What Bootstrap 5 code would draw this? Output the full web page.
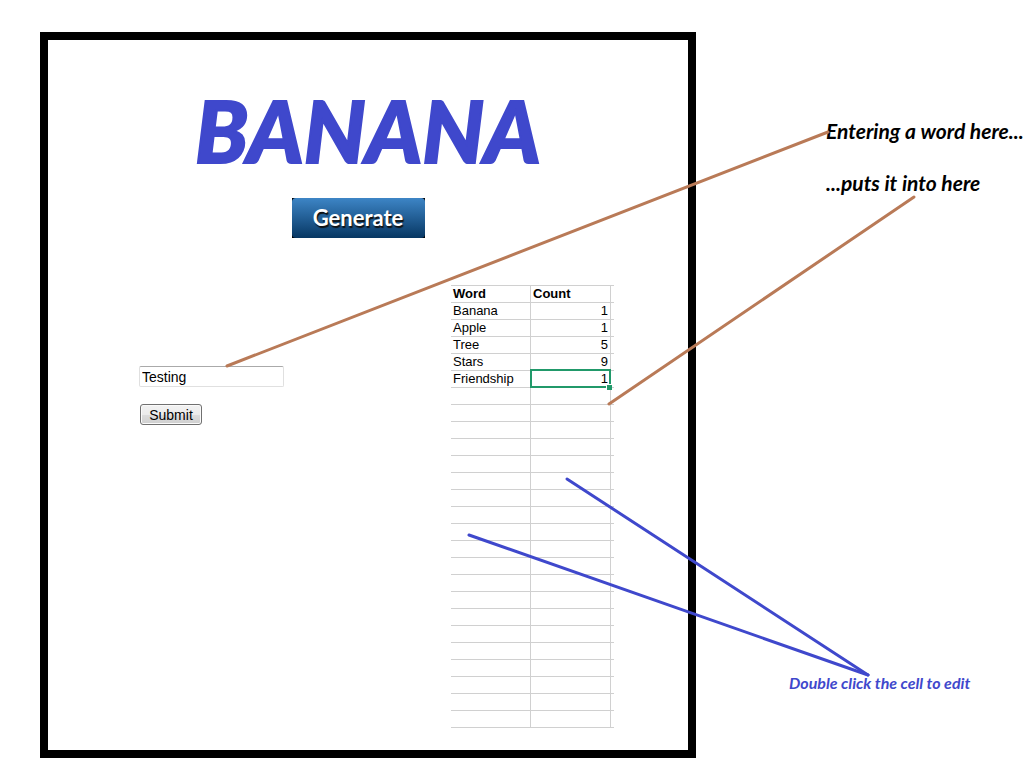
<!DOCTYPE html>
<html lang="en">
<head>
<meta charset="utf-8">
<meta name="viewport" content="width=device-width, initial-scale=1">
<title>Banana word generator</title>
<link href="https://cdn.jsdelivr.net/npm/bootstrap@5.3.0/dist/css/bootstrap.min.css" rel="stylesheet">
<style>
body { background: #fff; color: #000; font: 13px/16px "Liberation Sans", Arial, sans-serif; }
.stage { display: grid; grid-template-columns: 656fr 340fr; padding: 32px 0 14px 40px; }
.frame { border: 8px solid #000; padding: 46px 0 22px; }
.title, .gen-btn, .note { font-family: Lato, Carlito, Calibri, sans-serif; font-weight: 700; }
.title { font-size: 86px; line-height: 88px; font-style: italic; font-weight: 900; color: #3f48cc; -webkit-text-stroke: 2px #3f48cc; }
.gen-wrap { padding: 24px 20px 0 0; }
.gen-back { background: #000; }
.gen-btn { width: 133px; height: 40px; padding: 0; border: 0; border-radius: 4px; color: #fff; font-size: 22px; line-height: 40px;
  background: linear-gradient(#3d85c6, #073763); text-shadow: 1px 2px 1px #111; }
.work { display: grid; grid-template-columns: 403fr 237fr; padding-top: 47px; }
.entry { padding: 81px 0 0 91px; font-size: 14px; }
.word-box { width: 145px; height: 21px; padding: 1px 2px; line-height: 16px; border: 1px solid #e0e0e0; border-top-color: #aaa; border-radius: 2px; color: #000; }
.send { width: 62px; height: 21px; margin: 17px 0 0 1px; padding: 0; line-height: 16px; border: 1px solid #707070; border-radius: 3px; color: #000;
  background: linear-gradient(#f2f2f2, #ebebeb 50%, #ddd 50%, #cfcfcf); box-shadow: inset 0 0 0 1px #fafafa; }
.sheet { width: 163px; table-layout: fixed; border-collapse: separate; border-spacing: 0; border-top: 1px solid #d0d0d0; }
.sheet th, .sheet td { height: 17px; padding: 0 2px; line-height: 16px; border-bottom: 1px solid #d0d0d0; border-right: 1px solid #d0d0d0; white-space: nowrap; }
.sheet tbody th { font-weight: 400; }
.sheet tr > :last-child { padding: 0; border-right: 0; }
.sheet .picked { position: relative; }
.picked::before { content: ""; position: absolute; inset: -2px -1px -1px -1px; border: 2px solid #21996a; }
.picked::after { content: ""; position: absolute; right: -2px; bottom: -3px; width: 6px; height: 6px; background: #21996a; border: 1px solid #fff; border-width: 1px 0 0 1px; }
.col-word, .col-count { width: 80px; }
.notes { padding: 86px 0 66px 93px; }
.pair { padding-left: 37px; }
.note { margin: 0; font-style: italic; white-space: nowrap; }
.note-big { font-size: 21px; line-height: 26px; }
.note-big + .note-big { margin-top: 26px; }
.note-edit { font-size: 16px; line-height: 18px; color: #3f48cc; }
.pointers { position: absolute; inset: 0; width: 100%; height: 100%; pointer-events: none; }
.pointers line { stroke-width: 3px; vector-effect: non-scaling-stroke; stroke-linecap: round; }
</style>
</head>
<body>
<div class="stage position-relative">
  <main class="frame">
    <h1 class="title text-center m-0">BANANA</h1>
    <div class="gen-wrap d-flex justify-content-center"><div class="gen-back d-flex"><button type="button" class="gen-btn">Generate</button></div></div>
    <div class="work">
      <form class="entry d-flex flex-column align-items-start" onsubmit="return false">
        <input class="word-box" type="text" value="Testing" aria-label="Word">
        <button class="send" type="submit">Submit</button>
      </form>
      <div>
      <table class="sheet">
        <colgroup><col class="col-word"><col class="col-count"><col></colgroup>
        <thead><tr><th>Word</th><th>Count</th><td></td></tr></thead>
        <tbody>
        <tr><th scope="row">Banana</th><td class="text-end">1</td><td></td></tr>
        <tr><th scope="row">Apple</th><td class="text-end">1</td><td></td></tr>
        <tr><th scope="row">Tree</th><td class="text-end">5</td><td></td></tr>
        <tr><th scope="row">Stars</th><td class="text-end">9</td><td></td></tr>
        <tr><th scope="row">Friendship</th><td class="picked text-end">1</td><td></td></tr>
        <tr><td></td><td></td><td></td></tr>
        <tr><td></td><td></td><td></td></tr>
        <tr><td></td><td></td><td></td></tr>
        <tr><td></td><td></td><td></td></tr>
        <tr><td></td><td></td><td></td></tr>
        <tr><td></td><td></td><td></td></tr>
        <tr><td></td><td></td><td></td></tr>
        <tr><td></td><td></td><td></td></tr>
        <tr><td></td><td></td><td></td></tr>
        <tr><td></td><td></td><td></td></tr>
        <tr><td></td><td></td><td></td></tr>
        <tr><td></td><td></td><td></td></tr>
        <tr><td></td><td></td><td></td></tr>
        <tr><td></td><td></td><td></td></tr>
        <tr><td></td><td></td><td></td></tr>
        <tr><td></td><td></td><td></td></tr>
        <tr><td></td><td></td><td></td></tr>
        <tr><td></td><td></td><td></td></tr>
        <tr><td></td><td></td><td></td></tr>
        <tr><td></td><td></td><td></td></tr>
        </tbody>
      </table>
      </div>
    </div>
  </main>
  <aside class="notes d-flex flex-column justify-content-between">
    <div class="pair">
      <p class="note note-big">Entering a word here...</p>
      <p class="note note-big">...puts it into here</p>
    </div>
    <p class="note note-edit">Double click the cell to edit</p>
  </aside>
  <svg class="pointers" viewBox="0 0 1036 772" preserveAspectRatio="none" aria-hidden="true">
    <g stroke="#b97a57">
      <line x1="227" y1="366" x2="828" y2="132"/>
      <line x1="609" y1="404" x2="914" y2="197"/>
    </g>
    <g stroke="#3f48cc">
      <line x1="567" y1="479" x2="868" y2="675"/>
      <line x1="469" y1="535" x2="868" y2="675"/>
    </g>
  </svg>
</div>
<script src="https://cdn.jsdelivr.net/npm/bootstrap@5.3.0/dist/js/bootstrap.bundle.min.js"></script>
</body>
</html>
